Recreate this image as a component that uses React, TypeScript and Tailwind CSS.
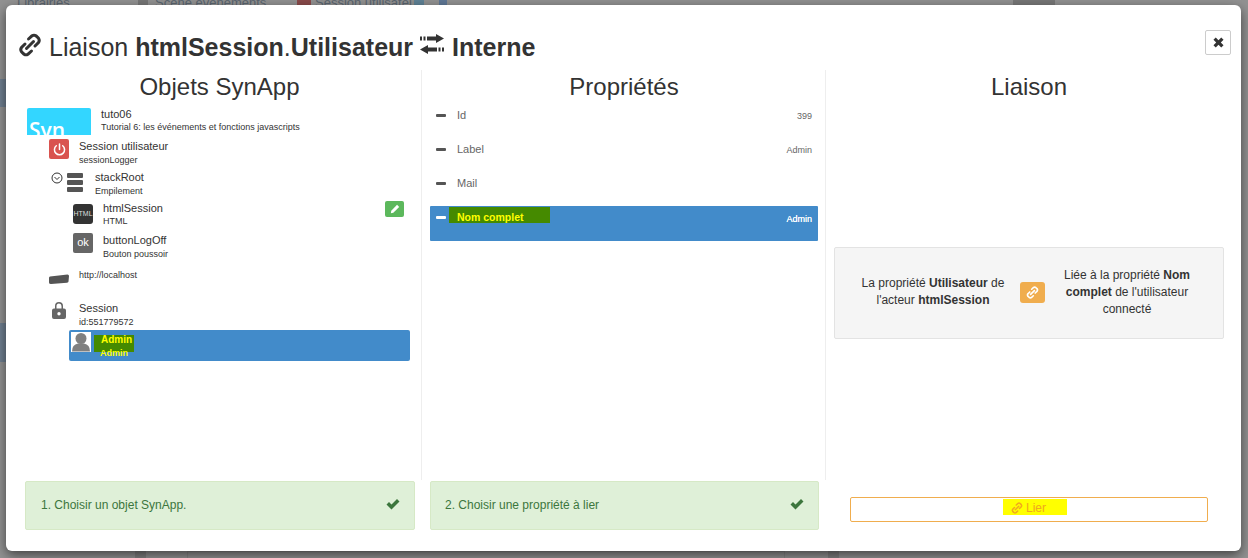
import React from 'react'

const LinkIcon = ({ className }: { className?: string }) => (
  <svg viewBox="0 0 24 24" className={className} fill="none" stroke="currentColor" strokeWidth="3" strokeLinecap="round">
    <path d="M10.5 6 L14 2.8 Q16 1.5 18 2.8 L20.5 5.2 Q22 7.5 20.5 9.5 L17 13" />
    <path d="M15.5 8.5 L8.5 15.5" />
    <path d="M13.5 18 L10 21.2 Q8 22.5 6 21.2 L3.5 18.8 Q2 16.5 3.5 14.5 L7 11" />
  </svg>
)

const TransferIcon = ({ className }: { className?: string }) => (
  <svg viewBox="0 0 24 20" className={className} fill="currentColor">
    <path d="M16 0 L24 4.5 L16 9 V6.5 H7 V2.5 H16 Z" />
    <path d="M8 11 L0 15.5 L8 20 V17.5 H17 V13.5 H8 Z" />
    <rect x="0" y="2.5" width="2" height="4" />
    <rect x="3.5" y="2.5" width="2" height="4" />
    <rect x="18.5" y="13.5" width="2" height="4" />
    <rect x="22" y="13.5" width="2" height="4" />
  </svg>
)

const CheckIcon = () => (
  <svg viewBox="0 0 14 12" className="w-[14px] h-[12px] -mt-[2px]" fill="#3c763d">
    <path d="M0.5 6.5 L3 4 L5.5 6.5 L11 1 L13.5 3.5 L5.5 11.5 Z" />
  </svg>
)

const Minus = ({ white }: { white?: boolean }) => (
  <span className={`block w-[10px] h-[3px] rounded-[1px] ${white ? 'bg-white' : 'bg-[#555555]'}`} />
)

const TreeRow = ({
  indent,
  height,
  title,
  sub,
  textLeft,
  icon,
}: {
  indent: string
  height: string
  title: string
  sub?: string
  textLeft: string
  icon: React.ReactNode
}) => (
  <div className={`flex items-start ${indent} ${height}`}>
    {icon}
    <div className={`${textLeft} text-[#333333]`}>
      <div className="text-[11px] leading-[13px]">{title}</div>
      {sub && <div className="text-[9px] leading-[13px] mt-[1px]">{sub}</div>}
    </div>
  </div>
)

const PropRow = ({ label, value }: { label: string; value?: string }) => (
  <div className="flex h-[34px] pl-[6px] pr-[6px] text-[#666666]">
    <div className="w-[10px] pt-[6px]">
      <Minus />
    </div>
    <div className="ml-[11px] text-[11px] leading-[13px] mt-[1px] flex-1">{label}</div>
    {value && <div className="text-[9px] leading-[12px] mt-[2px]">{value}</div>}
  </div>
)

export default function App() {
  return (
    <div className="relative flex flex-col w-[1248px] h-[558px] overflow-hidden bg-[#929292] font-['Liberation_Sans',Arial,sans-serif]">
      {/* page behind the modal */}
      <div className="flex items-center h-[5px] shrink-0 text-[13px] leading-[5px] text-[#5a6570] whitespace-nowrap">
        <span className="ml-[17px] w-[121px]">Librairies</span>
        <span className="w-[10px] h-[5px] bg-[#777777] mr-[7px]" />
        <span className="w-[142px]">Scène événements</span>
        <span className="w-[14px] h-[5px] bg-[#8a4a4a] mr-[4px]" />
        <span className="w-[99px]">Session utilisateur</span>
        <span className="w-[10px] h-[5px] bg-[#5f8296] mr-[15px]" />
        <span className="w-[8px] h-[5px] bg-[#5f7896]" />
        <span className="ml-[566px] w-[42px] h-[5px] bg-[#777777]" />
      </div>
      <div className="flex-1 flex flex-col w-[6px]">
        <div className="mt-[74px] h-[28px] bg-[#6f7f90]" />
        <div className="mt-[216px] h-[39px] bg-[#6f7f90]" />
      </div>
      <div className="flex h-[7px] shrink-0">
        <div className="ml-[135px] w-[11px] bg-[#808080]" />
        <div className="ml-[41px] w-[598px] border-x border-t border-[#868686]" />
        <div className="ml-[43px] w-[11px] bg-[#808080]" />
      </div>

      <div className="absolute left-[6px] top-[5px] w-[1235px] h-[546px] bg-white rounded-[6px] shadow-[0_4px_12px_rgba(0,0,0,0.55)] text-[#333333]">
        <div className="flex items-center h-[65px] pl-[12px] pr-[10px] pt-[19px]">
          <LinkIcon className="w-[24px] h-[26px] mr-[7px] -mt-[5px]" />
          <h1 className="text-[25px] leading-[26px] whitespace-nowrap">
            Liaison <b>htmlSession</b>.<b>Utilisateur</b>
          </h1>
          <TransferIcon className="w-[24px] h-[20px] ml-[7px] mr-[8px] -mt-[7px]" />
          <b className="text-[25px] leading-[26px]">Interne</b>
          <button className="ml-auto w-[26px] h-[25px] -mt-[9px] flex items-center justify-center border border-[#cccccc] rounded-[2px] bg-white">
            <svg viewBox="0 0 12 12" className="w-[11px] h-[11px]" fill="#333333">
              <path d="M0.5 3 L3 0.5 L6 3.5 L9 0.5 L11.5 3 L8.5 6 L11.5 9 L9 11.5 L6 8.5 L3 11.5 L0.5 9 L3.5 6 Z" />
            </svg>
          </button>
        </div>

        <div className="flex h-[410px]">
          <div className="w-[416px] border-r border-[#eeeeee] pl-[15px]">
            <h2 className="text-[24px] leading-[34px] text-center pr-[3px]">Objets SynApp</h2>
            <div>
              <TreeRow
                indent="ml-[6px] mt-[4px]"
                height="h-[31px]"
                textLeft="ml-[10px] [&>div:last-child]:mt-0"
                title="tuto06"
                sub="Tutorial 6: les événements et fonctions javascripts"
                icon={
                  <div className="w-[64px] h-[27px] bg-[#33d6ff] rounded-t-[2px] overflow-hidden text-white font-['Open_Sans',sans-serif] font-semibold text-[21px] leading-[27px] pl-[2px] pt-[9px]">
                    Syn
                  </div>
                }
              />
              <TreeRow
                indent="ml-[28px]"
                height="h-[31px]"
                textLeft="ml-[10px] mt-[1px]"
                title="Session utilisateur"
                sub="sessionLogger"
                icon={
                  <div className="w-[20px] h-[20px] rounded-[2px] bg-[#d9534f] flex items-center justify-center">
                    <svg viewBox="0 0 16 16" className="w-[15px] h-[15px]" fill="none" stroke="white" strokeWidth="1.6" strokeLinecap="round">
                      <path d="M8 2 V8" />
                      <path d="M4.6 4 A5.4 5.4 0 1 0 11.4 4" />
                    </svg>
                  </div>
                }
              />
              <TreeRow
                indent="ml-[30px]"
                height="h-[31px]"
                textLeft="ml-[12px] mt-[1px]"
                title="stackRoot"
                sub="Empilement"
                icon={
                  <div className="flex items-start">
                    <svg viewBox="0 0 12 12" className="w-[12px] h-[12px] mt-[2px]" fill="none" stroke="#333333">
                      <circle cx="6" cy="6" r="5" />
                      <path d="M3.5 5 L6 7.5 L8.5 5" />
                    </svg>
                    <div className="ml-[4px] w-[16px] flex flex-col gap-[2px] mt-[3px]">
                      <span className="h-[5px] rounded-[1px] bg-[#555555]" />
                      <span className="h-[5px] rounded-[1px] bg-[#555555]" />
                      <span className="h-[5px] rounded-[1px] bg-[#555555]" />
                    </div>
                  </div>
                }
              />
              <div className="flex items-start h-[32px] ml-[52px] mr-[17px]">
                <div className="w-[20px] h-[20px] mt-[3px] rounded-[3px] bg-[#333333] text-[#dddddd] text-[7px] leading-[20px] text-center">
                  HTML
                </div>
                <div className="ml-[10px] text-[#333333]">
                  <div className="text-[11px] leading-[13px] mt-[1px]">htmlSession</div>
                  <div className="text-[9px] leading-[13px]">HTML</div>
                </div>
                <button className="ml-auto w-[19px] h-[16px] rounded-[2px] bg-[#5cb85c] flex items-center justify-center">
                  <svg viewBox="0 0 12 12" className="w-[10px] h-[10px]" fill="white">
                    <path d="M8.5 1 L11 3.5 L4 10.5 L1 11 L1.5 8 Z" />
                  </svg>
                </button>
              </div>
              <TreeRow
                indent="ml-[52px]"
                height="h-[32px]"
                textLeft="ml-[10px] mt-[1px]"
                title="buttonLogOff"
                sub="Bouton poussoir"
                icon={
                  <div className="w-[20px] h-[20px] rounded-[2px] bg-[#666666] text-white text-[11px] leading-[19px] text-center">
                    ok
                  </div>
                }
              />
              <div className="flex items-start h-[37px] ml-[28px]">
                <svg viewBox="0 0 20 10" className="w-[20px] h-[10px] mt-[9px]" fill="#555555">
                  <path d="M1 2.5 L18.5 0.5 Q20 0.5 20 2 L19.5 7.5 Q19.5 8.5 18 8.7 L2 10 Q0 10 0 8.5 L0 4 Q0 2.5 1 2.5 Z" />
                </svg>
                <div className="ml-[10px] text-[9px] leading-[12px] mt-[4px] text-[#333333]">http://localhost</div>
              </div>
              <TreeRow
                indent="ml-[28px]"
                height="h-[28px]"
                textLeft="ml-[10px]"
                title="Session"
                sub="id:551779572"
                icon={
                  <div className="w-[20px] flex justify-center">
                    <svg viewBox="0 0 14 18" className="w-[14px] h-[18px] -mt-[1px]" fill="#666666">
                      <path d="M3 8 V5 A4 4 0 0 1 11 5 V8 H9.5 V5 A2.5 2.5 0 0 0 4.5 5 V8 Z" />
                      <path fillRule="evenodd" d="M2 7.5 H12 Q14 7.5 14 9.5 V16 Q14 18 12 18 H2 Q0 18 0 16 V9.5 Q0 7.5 2 7.5 Z M7 11 A1.7 1.7 0 1 0 7 14.4 A1.7 1.7 0 1 0 7 11 Z" />
                    </svg>
                  </div>
                }
              />
              <div className="flex items-start h-[31px] ml-[48px] mr-[11px] bg-[#428bca] rounded-[2px] pl-[2px] pt-[2px]">
                <div className="w-[20px] h-[20px] bg-white overflow-hidden">
                  <svg viewBox="0 0 20 20" className="w-[20px] h-[20px]" fill="#808080">
                    <circle cx="10" cy="6.5" r="5.5" />
                    <path d="M1 19.5 Q1 12.5 7 11.5 H13 Q19 12.5 19 19.5 Z" />
                  </svg>
                </div>
                <div className="ml-[3px] mt-[3px] w-[40px] h-[17px] bg-[#458a00] pl-[7px] text-[#ffff00] font-bold">
                  <div className="text-[10px] leading-[13px] -mt-[2px]">Admin</div>
                  <div className="text-[9px] leading-[12px] mt-[1px] -ml-[1px] whitespace-nowrap">Admin</div>
                </div>
              </div>
            </div>
          </div>

          <div className="w-[404px] border-r border-[#eeeeee] pl-[8px] pr-[7px]">
            <h2 className="text-[24px] leading-[34px] text-center">Propriétés</h2>
            <div className="mt-[4px]">
              <PropRow label="Id" value="399" />
              <PropRow label="Label" value="Admin" />
              <PropRow label="Mail" />
              <div className="flex h-[35px] -mt-[4px] pl-[6px] pr-[6px] bg-[#428bca] rounded-[1px] text-white">
                <div className="w-[10px] pt-[10px]">
                  <Minus white />
                </div>
                <div className="ml-[3px] mt-[1px] w-[101px] h-[16px] bg-[#458a00] pl-[8px] text-[10.5px] font-bold leading-[20px] text-[#ffff00]">
                  Nom complet
                </div>
                <div className="ml-auto text-[9px] leading-[12px] mt-[7px] [text-shadow:0_0_0.5px_white]">Admin</div>
              </div>
            </div>
          </div>

          <div className="w-[398px] pl-[8px]">
            <h2 className="text-[24px] leading-[34px] text-center">Liaison</h2>
            <div className="mt-[143px] h-[92px] pb-[2px] bg-[#f5f5f5] border border-[#e3e3e3] rounded-[2px] flex items-center text-[12px] leading-[17px] text-[#333333]">
              <div className="w-[160px] ml-[18px] shrink-0 text-center">
                La propriété <b>Utilisateur</b> de l'acteur <b>htmlSession</b>
              </div>
              <button className="ml-[7px] w-[25px] h-[21px] shrink-0 rounded-[3px] bg-[#f0ad4e] flex items-center justify-center text-white">
                <LinkIcon className="w-[13px] h-[13px]" />
              </button>
              <div className="w-[140px] ml-[12px] shrink-0 text-center">
                Liée à la propriété <b>Nom complet</b> de l'utilisateur connecté
              </div>
            </div>
          </div>
        </div>

        <div className="flex mt-[1px]">
          <div className="ml-[19px] w-[390px] h-[49px] pb-[2px] bg-[#dff0d8] border border-[#d6e9c6] rounded-[2px] flex items-center justify-between pl-[15px] pr-[14px] text-[12px] text-[#3c763d]">
            <span>1. Choisir un objet SynApp.</span>
            <CheckIcon />
          </div>
          <div className="ml-[15px] w-[389px] h-[49px] pb-[2px] bg-[#dff0d8] border border-[#d6e9c6] rounded-[2px] flex items-center justify-between pl-[14px] pr-[14px] text-[12px] text-[#3c763d]">
            <span>2. Choisir une propriété à lier</span>
            <CheckIcon />
          </div>
          <button className="ml-[31px] mt-[16px] w-[358px] h-[25px] pl-[152px] border border-[#f0ad4e] rounded-[2px] bg-white flex text-[12px] text-[#f0a81e]">
            <span className="mt-[1px] w-[64px] h-[16px] pl-[8px] pt-[2px] bg-[#ffff00] flex items-center leading-[14px]">
              <LinkIcon className="w-[12px] h-[12px] mr-[3px] shrink-0" />
              Lier
            </span>
          </button>
        </div>
      </div>
    </div>
  )
}
